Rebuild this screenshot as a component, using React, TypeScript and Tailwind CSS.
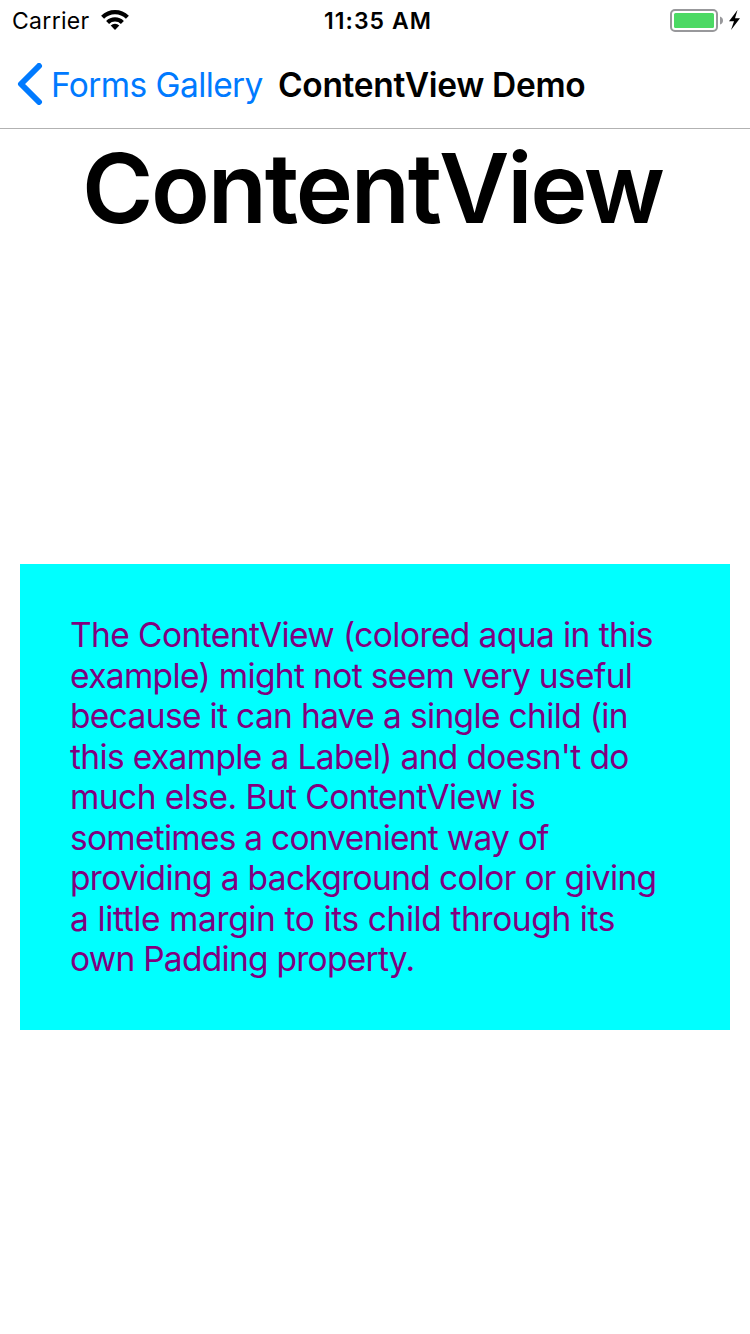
import React from "react";

const lines: { text: string; tracking: string }[] = [
  { text: "The ContentView (colored aqua in this", tracking: "tracking-[-0.58px]" },
  { text: "example) might not seem very useful", tracking: "tracking-[-0.65px]" },
  { text: "because it can have a single child (in", tracking: "tracking-[-0.65px]" },
  { text: "this example a Label) and doesn't do", tracking: "tracking-[-0.64px]" },
  { text: "much else. But ContentView is", tracking: "tracking-[-0.55px]" },
  { text: "sometimes a convenient way of", tracking: "tracking-[-0.74px]" },
  { text: "providing a background color or giving", tracking: "tracking-[-0.665px]" },
  { text: "a little margin to its child through its", tracking: "tracking-[-0.39px]" },
  { text: "own Padding property.", tracking: "tracking-[-0.73px]" },
];

export default function App() {
  return (
    <div className="flex h-[1334px] w-[750px] flex-col overflow-hidden bg-white font-['Inter',sans-serif] text-black">
      <header className="flex h-[129px] flex-col border-b border-[#b2b2b2]">
        <div className="flex h-10 items-center pl-3 text-[23px]">
          <span className="w-[78px] pt-0.5 whitespace-nowrap tracking-[0.3px]">Carrier</span>
          <svg className="ml-[10px] h-[22px] w-[30px]" viewBox="0 0 30 22" fill="none" stroke="#000" strokeWidth="4.2">
            <path d="M2.6 8.3a17.5 17.5 0 0 1 24.8 0M7.6 13.4a10.5 10.5 0 0 1 14.8 0" />
            <path d="M10.7 16.6a6 6 0 0 1 8.6 0L15 21z" fill="#000" stroke="none" />
          </svg>
          <span className="ml-[194px] w-[108px] pt-0.5 whitespace-nowrap font-[560] tracking-[1.05px]">11:35 AM</span>
          <svg className="ml-[238px] h-6 w-[72px]" viewBox="0 0 72 24">
            <rect x="1" y="2" width="46" height="21" rx="4" fill="none" stroke="#98989b" strokeWidth="2" />
            <rect x="4" y="5" width="40" height="15" rx="1.5" fill="#4cd964" />
            <path d="M50 8.5q3 1 3 4t-3 4z" fill="#98989b" />
            <path d="M67.5 2L59 13.2h5L61 22l9-11.7h-5z" fill="#000" />
          </svg>
        </div>
        <div className="flex h-[88px] items-center pl-[17px] text-[33.5px]">
          <svg className="h-[42px] w-[26px]" viewBox="0 0 26 42" fill="none" stroke="#007aff" strokeWidth="6" strokeLinecap="round" strokeLinejoin="round">
            <path d="M22 3L4 21 22 39" />
          </svg>
          <span className="ml-2 w-[212px] pt-0.5 whitespace-nowrap tracking-[-0.6px] text-[#007aff]">Forms Gallery</span>
          <h1 className="ml-[15px] pt-0.5 whitespace-nowrap font-[580] tracking-[-0.33px]">ContentView Demo</h1>
        </div>
      </header>
      <main className="flex flex-col px-5">
        <h2 className="h-[435px] whitespace-nowrap pl-[62px] text-[96.8px] leading-[117px] font-[570] tracking-[-2.25px]">ContentView</h2>
        <section className="h-[466px] bg-[#00ffff] pt-[51px] pl-[50px] text-[33.5px] leading-[40.5px] text-[#800080]">
          {lines.map((l) => (
            <p key={l.text} className="whitespace-nowrap"><span className={l.tracking}>{l.text}</span></p>
          ))}
        </section>
      </main>
    </div>
  );
}
